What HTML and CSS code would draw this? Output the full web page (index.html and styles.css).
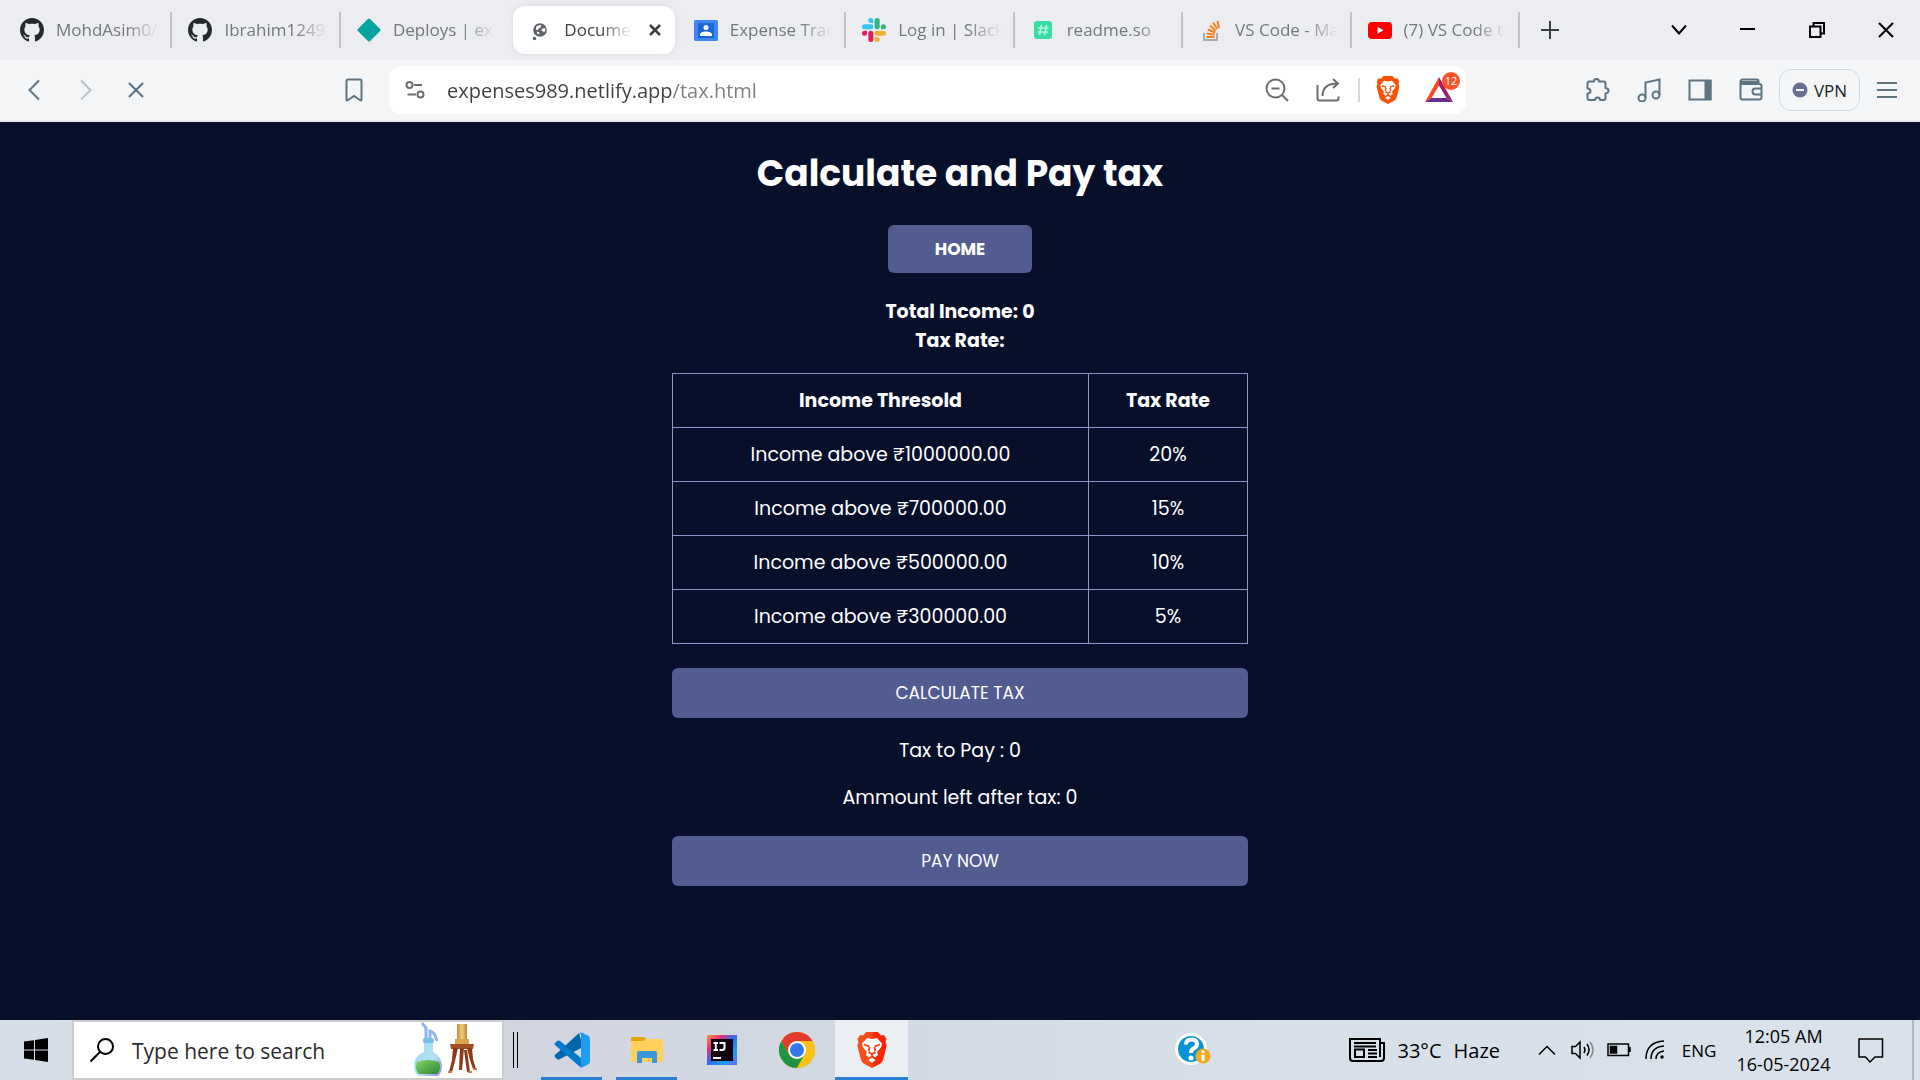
FILE: index.html
```html
<!DOCTYPE html>
<html lang="en">
<head>
<meta charset="utf-8">
<title>Document</title>
<link rel="stylesheet" href="styles.css">
</head>
<body>
<svg class="defs" aria-hidden="true">
  <defs>
    <symbol id="github" viewBox="0 0 16 16"><path fill="#24292f" d="M8 0C3.58 0 0 3.58 0 8c0 3.54 2.29 6.53 5.47 7.59.4.07.55-.17.55-.38 0-.19-.01-.82-.01-1.49-2.01.37-2.53-.49-2.69-.94-.09-.23-.48-.94-.82-1.13-.28-.15-.68-.52-.01-.53.63-.01 1.08.58 1.23.82.72 1.21 1.87.87 2.33.66.07-.52.28-.87.51-1.07-1.78-.2-3.64-.89-3.64-3.95 0-.87.31-1.59.82-2.15-.08-.2-.36-1.02.08-2.12 0 0 .67-.21 2.2.82.64-.18 1.32-.27 2-.27.68 0 1.36.09 2 .27 1.53-1.04 2.2-.82 2.2-.82.44 1.1.16 1.92.08 2.12.51.56.82 1.27.82 2.15 0 3.07-1.87 3.75-3.65 3.95.29.25.54.73.54 1.48 0 1.07-.01 1.93-.01 2.2 0 .21.15.46.55.38A8.013 8.013 0 0016 8c0-4.42-3.58-8-8-8z"/></symbol>
    <linearGradient id="lionFill" x1="0" x2="1"><stop offset="0" stop-color="#f4511e"/><stop offset=".5" stop-color="#fb4a1a"/><stop offset=".55" stop-color="#ff2a00"/><stop offset="1" stop-color="#ff2000"/></linearGradient>
    <symbol id="lion" viewBox="0 0 30 36">
      <path d="M9 0h12l3 3.400 3-.4 2.500 4-1 3 1.200 3.500-3.600 14.200q-.8 2.500-3 4L15 36l-8.100-4.300q-2.200-1.500-3-4L.3 13.500 1.500 10l-1-3L3 3l3 .4z"/>
      <path fill="#fff" d="M10 6l5 1 5-1 5 5.500-.8 3.500-4 5 .8 3-3 2.500-1.500-1.300-1.500-.4-1.500.4L12 25.500 9 23l.8-3-4-5-.8-3.500z"/>
      <path fill="none" stroke="currentColor" stroke-width="1.800" d="M7 12.500l5.500 1.800M23 12.500l-5.500 1.800M12.500 15l-.8 4M17.500 15l.8 4M11.500 20l3.500 2 3.500-2M15 22v2.500"/>
      <path fill="#fff" d="M15 25.800l3.600 2.200-3.600 3-3.600-3z"/>
    </symbol>
  </defs>
</svg>

<header class="browser">
  <div class="tabstrip">
    <nav class="tabs" aria-label="Tabs">
      <a class="tab" href="#"><svg class="favicon"><use href="#github"/></svg><span class="tab-title">MohdAsim0/Expense</span></a>
      <a class="tab" href="#"><svg class="favicon"><use href="#github"/></svg><span class="tab-title">Ibrahim1249/Expense</span></a>
      <a class="tab tab-before" href="#"><svg class="favicon" viewBox="0 0 24 24"><path fill="#05a3a0" stroke="#05a3a0" stroke-width="3" stroke-linejoin="round" d="M12 2l10 10-10 10L2 12z"/></svg><span class="tab-title">Deploys | expenses</span></a>
      <div class="tab tab-active">
        <svg class="favicon" viewBox="0 0 24 24"><circle cx="12" cy="12" r="6.800" fill="#5f6368"/><path fill="#fff" d="M8 9l3-2 2.500.5-1 2-2 1-.5 1.500-2-.3zM14.500 10.500l2.500-.5.500 2.500-1.500 2-1.500-1.500-1.500-.5zM9 13.500l2.500 1-.5 2-2-1.200z"/><circle cx="6.500" cy="20.500" r="1.800" fill="#4d6b80"/></svg>
        <a class="tab-title" href="#">Document</a>
        <button class="tab-close" aria-label="Close tab"><svg width="14" height="14" viewBox="0 0 14 14"><path d="M2 2l10 10M12 2L2 12" stroke="#3c4043" stroke-width="2.500"/></svg></button>
      </div>
      <a class="tab" href="#"><svg class="favicon" viewBox="0 0 24 24"><rect y="2" width="24" height="21" rx="1.500" fill="#4285f4"/><rect x="4" y="5" width="16" height="15" fill="#1967d2"/><circle cx="12" cy="9.500" r="2.500" fill="#fff"/><path fill="#fff" d="M6 18v-1.500c0-2 3-3 6-3s6 1 6 3V18z"/></svg><span class="tab-title">Expense Tracker</span></a>
      <a class="tab" href="#"><svg class="favicon" viewBox="0 0 24 24"><path fill="#e01e5a" d="M5.042 15.165a2.528 2.528 0 0 1-2.520 2.523A2.528 2.528 0 0 1 0 15.165a2.527 2.527 0 0 1 2.522-2.520h2.520v2.520zM6.313 15.165a2.527 2.527 0 0 1 2.521-2.520 2.527 2.527 0 0 1 2.521 2.520v6.313A2.528 2.528 0 0 1 8.834 24a2.528 2.528 0 0 1-2.521-2.522v-6.313z"/><path fill="#36c5f0" d="M8.834 5.042a2.528 2.528 0 0 1-2.521-2.520A2.528 2.528 0 0 1 8.834 0a2.528 2.528 0 0 1 2.521 2.522v2.520H8.834zM8.834 6.313a2.528 2.528 0 0 1 2.521 2.521 2.528 2.528 0 0 1-2.521 2.521H2.522A2.528 2.528 0 0 1 0 8.834a2.528 2.528 0 0 1 2.522-2.521h6.312z"/><path fill="#2eb67d" d="M18.956 8.834a2.528 2.528 0 0 1 2.522-2.521A2.528 2.528 0 0 1 24 8.834a2.528 2.528 0 0 1-2.522 2.521h-2.522V8.834zM17.688 8.834a2.528 2.528 0 0 1-2.523 2.521 2.527 2.527 0 0 1-2.520-2.521V2.522A2.527 2.527 0 0 1 15.165 0a2.528 2.528 0 0 1 2.523 2.522v6.312z"/><path fill="#ecb22e" d="M15.165 18.956a2.528 2.528 0 0 1 2.523 2.522A2.528 2.528 0 0 1 15.165 24a2.527 2.527 0 0 1-2.520-2.522v-2.522h2.520zM15.165 17.688a2.527 2.527 0 0 1-2.520-2.523 2.526 2.526 0 0 1 2.520-2.520h6.313A2.527 2.527 0 0 1 24 15.165a2.528 2.528 0 0 1-2.522 2.523h-6.313z"/></svg><span class="tab-title">Log in | Slack</span></a>
      <a class="tab" href="#"><svg class="favicon" viewBox="0 0 24 24"><rect x="3" y="3" width="18" height="18" rx="3" fill="#36dda3"/><path d="M10.500 7l-2 10M15.500 7l-2 10M7 10h10.500M6.500 14H17" stroke="#b6f5df" stroke-width="1.600" fill="none"/></svg><span class="tab-title">readme.so</span></a>
      <a class="tab" href="#"><svg class="favicon" viewBox="0 0 24 24"><path fill="none" stroke="#a9abae" stroke-width="2" d="M5 15v7h13v-7"/><path fill="none" stroke="#f48024" stroke-width="2" d="M7.500 19h8M7.700 15.500l8 1.300M8.700 11.500l7.500 3M10.800 7.500l6 5.300M14 4.500l4.300 6.500M18.500 3l1.500 7"/></svg><span class="tab-title">VS Code - Marketplace</span></a>
      <a class="tab" href="#"><svg class="favicon" viewBox="0 0 24 24"><rect y="4" width="24" height="17" rx="4" fill="#f00"/><path fill="#fff" d="M9.500 8.800v7l6-3.500z"/></svg><span class="tab-title">(7) VS Code tutorial</span></a>
    </nav>
    <button class="new-tab" aria-label="New tab"><svg width="18" height="18" viewBox="0 0 18 18"><path d="M9 0v18M0 9h18" stroke="#3c4043" stroke-width="2"/></svg></button>
    <div class="window-controls">
      <button aria-label="Search tabs"><svg width="16" height="12" viewBox="0 0 16 12"><path d="M1 1.500l7 8 7-8" fill="none" stroke="#000" stroke-width="2"/></svg></button>
      <button aria-label="Minimize"><svg width="16" height="16" viewBox="0 0 16 16"><path d="M0 7h15" stroke="#000" stroke-width="2"/></svg></button>
      <button aria-label="Restore"><svg width="16" height="16" viewBox="0 0 16 16"><path d="M1 4.500h10.500V15H1zM4.500 4V1H15v10.500h-3.500" fill="none" stroke="#000" stroke-width="2"/></svg></button>
      <button aria-label="Close window"><svg width="16" height="16" viewBox="0 0 16 16"><path d="M1 1l14 14M15 1L1 15" stroke="#000" stroke-width="2"/></svg></button>
    </div>
  </div>

  <div class="toolbar">
    <div class="tool-group">
      <button class="tool" aria-label="Back"><svg width="22" height="22" viewBox="0 0 22 22"><path d="M16 1.500L6.500 11l9.500 9.500"/></svg></button>
      <button class="tool tool-off" aria-label="Forward"><svg width="22" height="22" viewBox="0 0 22 22"><path d="M7 1.500l9.500 9.500L7 20.500"/></svg></button>
      <button class="tool" aria-label="Stop loading"><svg width="18" height="18" viewBox="0 0 18 18"><path d="M2 2l14 14M16 2L2 16"/></svg></button>
    </div>
    <div class="location">
      <button class="tool" aria-label="Bookmark"><svg width="18" height="24" viewBox="0 0 18 24"><path d="M1.500 3a1.500 1.500 0 0 1 1.500-1.500h12A1.500 1.500 0 0 1 16.500 3v18.500q0 1.500-1.500.5l-6-4-6 4q-1.500 1-1.500-.5z"/></svg></button>
      <div class="address">
        <button class="tool" aria-label="Site settings"><svg class="grey" width="20" height="20" viewBox="0 0 20 20"><circle cx="4.500" cy="5" r="3"/><circle cx="15.500" cy="14.500" r="3"/><path d="M9 5h8M2.500 14.500H11"/></svg></button>
        <input class="url" type="text" aria-label="Address" value="expenses989.netlify.app/tax.html">
        <button class="tool" aria-label="Zoom out"><svg class="grey" width="24" height="24" viewBox="0 0 24 24"><circle cx="10.500" cy="10.500" r="9"/><path d="M17 17l6 6M6.500 10.500h8"/></svg></button>
        <button class="tool" aria-label="Share"><svg class="grey" width="24" height="24" viewBox="0 0 24 24"><path d="M1.500 7v13.500a2 2 0 0 0 2 2h17a2 2 0 0 0 2-2v-2M6.500 18c0-8 4-12.500 15-12.500M17 1l5 4.500-5 4.500"/></svg></button>
        <span class="address-rule"></span>
        <button class="tool" aria-label="Brave Shields"><svg class="shield" width="24" height="28"><use href="#lion"/></svg></button>
        <button class="tool tool-rewards" aria-label="Brave Rewards"><svg class="solid" width="28" height="26" viewBox="0 0 28 26"><path fill="#ff4724" d="M14 0v8.500L6.500 21 0 25z"/><path fill="#9e1f63" d="M14 0l14 25-6.500-4L14 8.500z"/><path fill="#662d91" d="M0 25l6.500-4h15l6.500 4z"/></svg><span class="badge">12</span></button>
      </div>
    </div>
    <div class="tool-group">
      <button class="tool" aria-label="Extensions"><svg width="24" height="24" viewBox="0 0 24 24"><path stroke-linejoin="round" d="M1.500 5.500q0-2 2-2H8c0-3.500 5-3.500 5 0h4.500q2 0 2 2V10c4 .5 4 5 0 5.500V20q0 2-2 2H14c0-3.500-5-3.500-5 0H3.500q-2 0-2-2v-4.500c4 0 4-5 0-5z"/></svg></button>
      <button class="tool" aria-label="Playlist"><svg width="24" height="24" viewBox="0 0 24 24"><circle cx="5" cy="20" r="3.500"/><circle cx="19" cy="17" r="3.500"/><path d="M8.500 20V4.500l14-3V17"/></svg></button>
      <button class="tool" aria-label="Sidebar"><svg width="24" height="24" viewBox="0 0 24 24"><rect x="1.500" y="2.500" width="21" height="19"/><path class="filled" d="M17.500 3h5v18h-5z"/></svg></button>
      <button class="tool" aria-label="Wallet"><svg width="24" height="24" viewBox="0 0 24 24"><path d="M1.500 6V3.500a2 2 0 0 1 2-2h14a2 2 0 0 1 2 2V6M1.500 4h17M1.500 6h19a2 2 0 0 1 2 2v11.500a2 2 0 0 1-2 2h-17a2 2 0 0 1-2-2zM22.500 10.500h-6a3 3 0 0 0 0 6h6z"/></svg></button>
      <button class="vpn"><svg width="16" height="16" viewBox="0 0 16 16"><circle cx="8" cy="8" r="7.500" fill="#6b6f94"/><path d="M4 8h8" stroke="#fff" stroke-width="2"/></svg>VPN</button>
      <button class="tool" aria-label="Menu"><svg width="20" height="18" viewBox="0 0 20 18"><path d="M0 2h20M0 9h20M0 16h20"/></svg></button>
    </div>
  </div>
</header>

<main class="page">
  <h1>Calculate and Pay tax</h1>
  <button class="btn btn-home">HOME</button>
  <div class="summary">
    <div>Total Income: 0</div>
    <div>Tax Rate:</div>
  </div>
  <table class="rates">
    <thead><tr><th scope="col">Income Thresold</th><th scope="col">Tax Rate</th></tr></thead>
    <tbody>
      <tr><td>Income above ₹1000000.00</td><td>20%</td></tr>
      <tr><td>Income above ₹700000.00</td><td>15%</td></tr>
      <tr><td>Income above ₹500000.00</td><td>10%</td></tr>
      <tr><td>Income above ₹300000.00</td><td>5%</td></tr>
    </tbody>
  </table>
  <button class="btn">CALCULATE TAX</button>
  <div class="results">
    <p>Tax to Pay : 0</p>
    <p>Ammount left after tax: 0</p>
  </div>
  <button class="btn">PAY NOW</button>
</main>

<footer class="taskbar">
  <button class="start" aria-label="Start"><svg width="24" height="24" viewBox="0 0 24 24"><path d="M0 3.500l10-1.300v9.300H0zM11 2l13-2v11.500H11zM0 12.500h10v9.300L0 20.500zM11 12.500h13V24l-13-2z"/></svg></button>
  <label class="search">
    <svg width="24" height="24" viewBox="0 0 24 24"><circle cx="15.500" cy="8.500" r="7.500" fill="none" stroke="#000" stroke-width="2"/><path d="M10 14L.5 23.500" stroke="#000" stroke-width="2"/></svg>
    <input type="text" aria-label="Search" placeholder="Type here to search">
    <svg width="64" height="56" viewBox="0 0 64 56">
      <defs><linearGradient id="glass" x1="0" y1="0" x2="1" y2="1"><stop offset="0" stop-color="#8fe0ee"/><stop offset=".6" stop-color="#b7dff5"/><stop offset="1" stop-color="#8d84e8"/></linearGradient><linearGradient id="liquid" x1="0" y1="0" x2="1" y2="1"><stop offset="0" stop-color="#86d468"/><stop offset="1" stop-color="#2c8530"/></linearGradient><linearGradient id="brass"><stop offset="0" stop-color="#c58a3a"/><stop offset=".5" stop-color="#f0cf7a"/><stop offset="1" stop-color="#c08433"/></linearGradient></defs>
      <path d="M8 1l4 5v12M16 18V9q5 1 7 10" fill="none" stroke="#8fb3f3" stroke-width="3"/>
      <path d="M10 18h9v12c5 2 9 8 9 14 0 5-2 9-5 10H5c-3-1-5-5-5-10 0-6 4-12 10-14z" fill="url(#glass)"/><rect x="9" y="16" width="11" height="5" rx="2" fill="#78bfe8"/>
      <path d="M3 40q11-4 22 0c2 4 1 9-2 12H5c-3-3-4-8-2-12z" fill="url(#liquid)"/>
      <path d="M43 2h10v17H43z" fill="url(#brass)"/><path d="M41 17h14v5H41z" fill="#d8a650"/>
      <path d="M36 22h24l-1 5H37z" fill="#a34f24"/><path d="M39 26h5l-3 13-3 11h-3l3-12zM46 26h4l-2 22h-3zM53 26h5l1 11 3 10h-3l-3-9zM50 28h3l3 22h-3z" fill="#8c3a17"/><path d="M34 50h4M54 50h4M59 47h4" stroke="#c77b50" stroke-width="2"/>
    </svg>
  </label>
  <span class="grip"></span>
  <nav class="apps" aria-label="Apps">
    <button class="app app-open" aria-label="Visual Studio Code"><svg width="36" height="36" viewBox="0 0 36 36"><path fill="#0065a9" d="M27 8v8L6 27q-2 1-3 0l-2-2q-1-1 0-2L25 1z"/><path fill="#007acc" d="M1 13q-1-1 0-2l2-2q1-1 3 0l21 17v9l-2-1z"/><path fill="#1f9cf0" d="M25 35q2 1 4 0l5-2.500q2-1 2-3V6.500q0-2-2-3L29 1q-3-1-4 .5 2-.5 2 1.500v30q0 2-2 2z"/></svg></button>
    <button class="app app-open" aria-label="File Explorer"><svg width="32" height="28" viewBox="0 0 32 28"><path fill="#e2a200" d="M0 2q0-1 1-1h12l2 2-2 3H0z"/><path fill="#ffd15c" d="M0 5h12l3-2h15q2 0 2 2v19q0 2-2 2H2q-2 0-2-2z"/><path fill="#3a96dd" d="M6 27V17q0-2 2-2h16q2 0 2 2v10h-5v-5H11v5z"/></svg></button>
    <button class="app" aria-label="IntelliJ IDEA"><svg width="30" height="30" viewBox="0 0 30 30"><defs><linearGradient id="ij" x1="0" y1="0" x2="1" y2="1"><stop offset="0" stop-color="#ff9a3c"/><stop offset=".25" stop-color="#e82f78"/><stop offset=".5" stop-color="#2d6ff5"/><stop offset=".75" stop-color="#18a2f2"/><stop offset="1" stop-color="#7060ff"/></linearGradient></defs><path fill="url(#ij)" d="M0 0h30v30H0z"/><path fill="#12020f" d="M4 4h22v22H4z"/><path fill="none" stroke="#fff" stroke-width="2" d="M6.500 8h4.500M6.500 15h4.500M8.800 8v7M12.500 8h5v5q0 2-2.500 2h-2.500M6 23h8"/></svg></button>
    <button class="app" aria-label="Chrome"><svg width="36" height="36" viewBox="0 0 36 36"><circle cx="18" cy="18" r="18" fill="#fbc116"/><path fill="#e33b2e" d="M2.400 9A18 18 0 0 1 33.600 9H18l-7.800 13.500z"/><path fill="#229342" d="M2.400 9A18 18 0 0 0 18 36l7.800-13.500-15.600 0z"/><path fill="#fbc116" d="M18 36l7.800-13.500L18 9h15.600A18 18 0 0 1 18 36z"/><circle cx="18" cy="18" r="9" fill="#fff"/><circle cx="18" cy="18" r="7" fill="#3478ec"/></svg></button>
    <button class="app app-open app-current" aria-label="Brave"><svg class="brave" width="30" height="36" fill="url(#lionFill)"><use href="#lion"/></svg></button>
  </nav>
  <div class="tray">
    <button class="help" aria-label="Get help"><svg width="36" height="34" viewBox="0 0 36 34"><circle cx="16" cy="16" r="16" fill="#fff"/><circle cx="16" cy="16" r="13" fill="#0a94d6"/><path d="M11 11.500q0-5 5.500-5t5.500 4.500q0 3-3.500 4.500-2.500 1.500-2.500 4.500" fill="none" stroke="#fff" stroke-width="4"/><circle cx="16" cy="25" r="2.500" fill="#fff"/><circle cx="28" cy="23" r="7.500" fill="#f5a81c"/><path d="M28 21.500V28M28 17.500V20" stroke="#fff" stroke-width="3"/></svg></button>
    <button class="weather"><svg width="36" height="24" viewBox="0 0 36 24"><path fill="none" stroke="#000" stroke-width="2" d="M31 1H1v19q0 3 3 3h28q3 0 3-3V5h-4zM31 5v14M5 5h22M5 8.500h22M19 12h9M19 15.500h9M19 19h9M6 11.500h9v7.500H6z"/></svg><span>33°C</span><span>Haze</span></button>
    <button class="status" aria-label="Show hidden icons"><svg width="18" height="12" viewBox="0 0 18 12"><path d="M1 10.500l8-8 8 8"/></svg></button>
    <button class="status" aria-label="Volume"><svg width="24" height="20" viewBox="0 0 24 20"><path d="M1 6.500h3.500L9 2v16l-4.500-4.500H1zM13 7q2 3 0 6M16 4q4 5.500 0 11.500"/><path opacity=".4" d="M19 2q6 8 0 16"/></svg></button>
    <button class="status" aria-label="Battery"><svg width="24" height="14" viewBox="0 0 24 14"><path d="M1 1h20.500v11.500H1zM23 4v5"/><path fill="#000" d="M3.500 3.500h6v6.500h-6z"/></svg></button>
    <button class="status" aria-label="Network"><svg width="20" height="20" viewBox="0 0 20 20"><path d="M1 19Q1 2 19 1M6 19Q6 7 19 6M11 19q0-7 8-8"/><circle cx="17" cy="17" r="1"/></svg></button>
    <button class="lang">ENG</button>
    <button class="clock"><span>12:05 AM</span><span>16-05-2024</span></button>
    <button class="status notices" aria-label="Notifications"><svg width="26" height="26" viewBox="0 0 26 26"><path d="M1 2h23.500v18H17l-5 5-4.500-5H1z"/></svg></button>
  </div>
</footer>
</body>
</html>
```
FILE: styles.css
```css
* {
  box-sizing: border-box;
}

body {
  margin: 0;
  min-height: 100vh;
  display: flex;
  flex-direction: column;
  background: #070f2b;
  font-family: "Segoe UI", "Open Sans", sans-serif;
}

button,
input {
  font: inherit;
  color: inherit;
}

button {
  padding: 0;
  border: 0;
  background: none;
  display: flex;
  align-items: center;
  justify-content: center;
}

h1,
p {
  margin: 0;
}

.defs {
  position: absolute;
  width: 0;
  height: 0;
}

/* Browser window */

.browser {
  border-bottom: 2px solid #e9ebee;
}

.tabstrip {
  display: flex;
  height: 60px;
  background: #ecedf1;
}

.tabs {
  flex: 0 1 1520px;
  min-width: 0;
  display: grid;
  grid-template-columns: repeat(9, minmax(0, 1fr));
  padding-left: 4px;
}

.tab {
  min-width: 0;
  display: flex;
  align-items: center;
  gap: 12px;
  padding: 0 14px 0 16px;
  color: #74777b;
  font-size: 17px;
  line-height: 24px;
  text-decoration: none;
  background: linear-gradient(#c2c2c2, #c2c2c2) right center / 2px 36px no-repeat;
}

.tab-before {
  background: none;
}

.tab-active {
  margin: 6px 3px 6px 4px;
  padding: 0 13px 0 15px;
  background: #fff;
  border-radius: 12px;
  box-shadow: 0 0 6px #d8dadf;
  color: #3c4043;
}

.tab-close {
  margin-left: 4px;
}

.favicon {
  flex: none;
  width: 24px;
  height: 24px;
}

.tab-title {
  flex: 1;
  min-width: 0;
  overflow: hidden;
  white-space: nowrap;
  color: inherit;
  text-decoration: none;
  -webkit-mask-image: linear-gradient(to left, transparent, #000 32px);
  mask-image: linear-gradient(to left, transparent, #000 32px);
}

.new-tab {
  width: 60px;
}

.window-controls {
  display: flex;
  margin-left: auto;
}

.window-controls button {
  width: 69px;
}

.toolbar {
  display: flex;
  align-items: center;
  height: 60px;
  padding: 0 8px;
  background: #f3f5f7;
  color: #5f7481;
}

.tool-group {
  display: flex;
  align-items: center;
}

.tool {
  flex: none;
  width: 51px;
  height: 48px;
}

.tool svg {
  fill: none;
  stroke: currentColor;
  stroke-width: 2;
}

.tool .filled {
  fill: currentColor;
}

.tool .solid {
  stroke: none;
}

.tool .grey {
  color: #6b6e72;
}

.tool .shield {
  fill: #fb5000;
  stroke: none;
  color: #fb5000;
}

.tool-off {
  color: #b9c2c8;
}

.location {
  flex: 1;
  display: flex;
  gap: 10px;
  padding: 0 106px 0 167px;
}

.address {
  flex: 1;
  display: flex;
  align-items: center;
  padding-right: 2px;
  background: #fff;
  border-radius: 12px;
}

.url {
  flex: 1;
  min-width: 0;
  height: 48px;
  padding: 0 7px;
  border: 0;
  font-size: 20px;
  color: transparent;
  background: linear-gradient(to right, #3c4043 232px, #7b7e82 232px);
  -webkit-background-clip: text;
  background-clip: text;
}

.address-rule {
  width: 2px;
  height: 24px;
  margin: 0 2px 0 5px;
  background: #d5d7da;
}

.tool-rewards {
  position: relative;
}

.badge {
  position: absolute;
  top: 6px;
  right: 4px;
  width: 18px;
  height: 18px;
  border-radius: 9px;
  background: #fb542b;
  color: #fff;
  font-size: 11px;
  line-height: 18px;
  text-align: center;
}

.vpn {
  gap: 6px;
  width: 81px;
  height: 42px;
  margin: 0 1px 0 3px;
  border: 1px solid #cfd8de;
  border-radius: 12px;
  color: #1d1f25;
  font-size: 17px;
}

/* Tax page */

.page {
  flex: 1;
  display: flex;
  flex-direction: column;
  align-items: center;
  width: 30%;
  min-width: 480px;
  margin: 0 auto;
  padding: 25px 0 24px;
  color: #fff;
  font-family: "Poppins", "Inter", sans-serif;
  font-size: 19px;
  line-height: 30px;
  text-align: center;
}

.page h1 {
  margin-bottom: 24px;
  font-size: 36px;
  line-height: 54px;
}

.btn {
  width: 100%;
  height: 50px;
  border-radius: 6px;
  background: #535c91;
  font-size: 17px;
}

.btn-home {
  width: 144px;
  height: 48px;
  font-weight: 700;
}

.summary {
  margin: 24px 0 18px;
  font-weight: 700;
  line-height: 29px;
}

.rates {
  width: 100%;
  margin-bottom: 24px;
  border-collapse: collapse;
  table-layout: fixed;
}

.rates th,
.rates td {
  padding: 12px;
  border: 1px solid #9290c3;
  line-height: 29px;
}

.rates th:last-child {
  width: 159px;
}

.results {
  display: flex;
  flex-direction: column;
  gap: 17px;
  padding: 18px 0 23px;
}

/* Desktop taskbar */

.taskbar {
  display: flex;
  height: 60px;
  background: linear-gradient(to right, #d5dee8, #d2d5df 27%, #d1dae4 45%, #d7dfe8 65%, #d9e1ea);
  color: #000;
}

.start {
  width: 72px;
}

.search {
  flex: 0 1 432px;
  min-width: 0;
  display: flex;
  align-items: center;
  padding: 0 24px 0 16px;
  border: 2px solid #cbcbcb;
  background: #fff;
}

.search input {
  flex: 1;
  min-width: 0;
  padding: 2px 18px 0;
  border: 0;
  background: none;
  font-size: 21px;
}

.search input::placeholder {
  color: #2b2b2b;
}

.grip {
  width: 5px;
  height: 36px;
  margin: 12px 17px 0 9px;
  border: solid #000;
  border-width: 0 1px;
}

.apps {
  display: flex;
  gap: 2px;
}

.app {
  width: 73px;
  height: 60px;
}

.app-open {
  background: linear-gradient(#2b7fd0, #2b7fd0) center bottom / 61px 3px no-repeat;
}

.app-current {
  background: linear-gradient(#2b7fd0, #2b7fd0) center bottom / 100% 3px no-repeat #ebeff3;
}

.brave {
  color: #fb3a10;
}

.tray {
  display: flex;
  margin-left: auto;
  padding-right: 6px;
  font-size: 17px;
}

.tray button {
  min-width: 36px;
}

.status svg {
  fill: none;
  stroke: #000;
  stroke-width: 1.5;
}

.tray .help {
  margin-right: 138px;
}

.tray .weather {
  gap: 12px;
  margin-right: 29px;
  font-size: 20px;
}

.tray .lang {
  width: 52px;
}

.tray .clock {
  flex-direction: column;
  width: 117px;
  font-size: 18px;
  line-height: 28px;
}

.tray .notices {
  width: 72px;
  padding-right: 12px;
  border-right: 2px solid #b0b6be;
}
```
